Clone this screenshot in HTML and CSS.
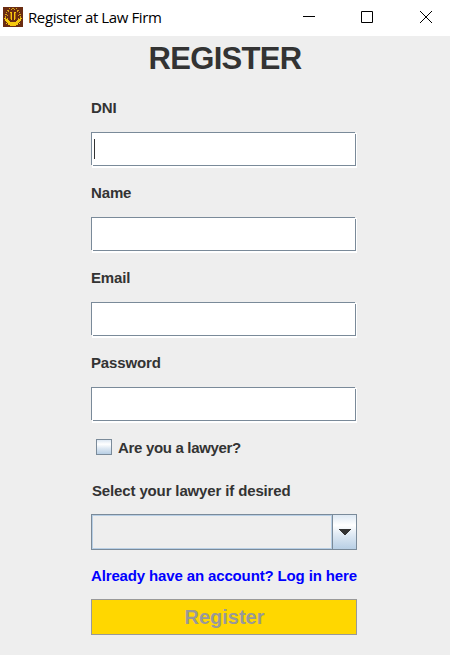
FILE: index.html
```html
<!DOCTYPE html>
<html lang="en">
<head>
<meta charset="utf-8">
<title>Register at Law Firm</title>
<link rel="stylesheet" href="styles.css">
</head>
<body>
<header class="titlebar">
  <svg class="app-icon" width="20" height="20" viewBox="0 0 20 20" shape-rendering="crispEdges">
    <path fill="#6b2d12" d="M0 0h20v20H0z"/>
    <path fill="#d9a514" d="M6 1h1v1H6zM9 1h2v1H9zM13 1h1v1h-1zM4 3h2v1H4zM8 2h1v1H8zM11 2h1v1h-1zM14 3h2v1h-2zM3 5h1v1H3zM5 4h1v1H5zM14 4h1v1h-1zM16 5h1v1h-1zM2 7h2v1H2zM16 7h2v1h-2zM4 8h1v1H4zM15 8h1v1h-1zM2 9h1v2H2zM17 9h1v2h-1zM4 11h1v1H4zM15 11h1v1h-1z"/>
    <path fill="#f6c90e" d="M1 11h2v1H1zM17 11h2v1h-2zM2 12h3v1H2zM15 12h3v1h-3zM2 13h4v1H2zM14 13h4v1h-4zM3 14h4v1H3zM13 14h4v1h-4zM4 15h12v1H4zM3 16h1v1H3zM5 16h10v1H5zM16 16h1v1h-1zM5 17h10v1H5zM7 18h6v1H7z"/>
    <path fill="#f6c90e" d="M7 5h2v1H7zM8 6h1v7H8zM11 5h2v1h-2zM11 6h1v7h-1z"/>
    <path fill="#a9680f" d="M7 6h1v6H7zM12 6h1v6h-1z"/>
  </svg>
  <span class="caption">Register at Law Firm</span>
  <svg class="controls" width="144" height="34" viewBox="0 0 144 34" fill="none" stroke="#000">
    <path d="M9 16.5h12"/>
    <path d="M67.5 11.5h11v11h-11z"/>
    <path d="M126 11l12 12M138 11l-12 12"/>
  </svg>
</header>
<main class="form">
  <h1 class="heading">REGISTER</h1>
  <div class="group"><label class="label">DNI</label><div class="field"><i class="caret"></i></div></div>
  <div class="group"><label class="label">Name</label><div class="field"></div></div>
  <div class="group"><label class="label">Email</label><div class="field"></div></div>
  <div class="group"><label class="label">Password</label><div class="field"></div></div>
  <div class="check"><span class="box"></span><span class="label check-label">Are you a lawyer?</span></div>
  <div class="label select-label">Select your lawyer if desired</div>
  <div class="combo">
    <div class="value"></div>
    <div class="arrow">
      <svg width="12" height="6" viewBox="0 0 12 6" shape-rendering="crispEdges"><path fill="#333" d="M0 0h12v1H0zM1 1h10v1H1zM2 2h8v1H2zM3 3h6v1H3zM4 4h4v1H4zM5 5h2v1H5z"/></svg>
    </div>
  </div>
  <a class="label login">Already have an account? Log in here</a>
  <div class="submit">Register</div>
</main>
</body>
</html>
```
FILE: styles.css
```css
* { box-sizing: border-box; }
body {
  margin: 0;
  width: 450px;
  height: 655px;
  overflow: hidden;
  background: #eee;
  color: #333;
  font-family: "Liberation Sans", sans-serif;
}
.titlebar {
  display: flex;
  height: 36px;
  padding-left: 3px;
  background: #fff;
}
.app-icon { margin-top: 7px; }
.caption {
  margin-left: 5px;
  color: #000;
  font: 15px/34px "Open Sans", sans-serif;
  letter-spacing: -0.4px;
  white-space: nowrap;
}
.controls { margin-left: auto; margin-right: 12px; }
.form {
  display: flex;
  flex-direction: column;
  width: 266px;
  margin-left: 91px;
}
.heading {
  margin: 5px 0 21px;
  font-size: 31px;
  line-height: 36px;
  letter-spacing: -0.7px;
  text-align: center;
  padding-left: 2px;
}
.label {
  display: block;
  font-size: 15px;
  font-weight: bold;
  line-height: 20px;
  letter-spacing: -0.14px;
  white-space: nowrap;
}
.check-label { letter-spacing: -0.32px; }
.group { height: 85px; }
.field {
  position: relative;
  width: 265px;
  height: 34px;
  margin-top: 14px;
  padding: 6px 2px;
  border: 1px solid #7a8a99;
  background: #fff;
  box-shadow: 1px 1px 0 #fff, 1px 2px 0 #fff;
}
/* Notched corners of the etched border */
.field::before,
.field::after {
  content: "";
  position: absolute;
  width: 1px;
  height: 1px;
  background: #eee;
}
.field::before { top: -1px; right: -1px; box-shadow: 0 1px 0 #fff; }
.field::after { bottom: -1px; left: -1px; box-shadow: 1px 0 0 #fff; }
.caret {
  display: block;
  width: 1px;
  height: 20px;
  background: #333;
}
.check {
  display: flex;
  align-items: flex-start;
  gap: 6px;
  height: 20px;
  padding-left: 5px;
}
.box {
  width: 16px;
  height: 16px;
  margin-top: 1px;
  border: 1px solid #7a8a99;
  background: linear-gradient(#dde8f3, #fff 30%, #dde8f3 60%, #b8cfe5);
}
.select-label { margin: 23px 0 13px 1px; }
.combo {
  display: flex;
  height: 36px;
  border: 1px solid #7a8a99;
}
.value {
  flex: 1;
  border: 1px solid #b8cfe5;
}
.arrow {
  display: flex;
  align-items: center;
  justify-content: center;
  width: 24px;
  padding-left: 1px;
  border-left: 1px solid #7a8a99;
  background: linear-gradient(#dde8f3, #fff 30%, #dde8f3 60%, #b8cfe5);
}
.login { margin: 16px 0 13px; color: #00f; }
.submit {
  height: 36px;
  padding-left: 1px;
  border: 1px solid #999;
  background: gold;
  color: #999;
  font-size: 20px;
  font-weight: bold;
  line-height: 34px;
  text-align: center;
}
```
